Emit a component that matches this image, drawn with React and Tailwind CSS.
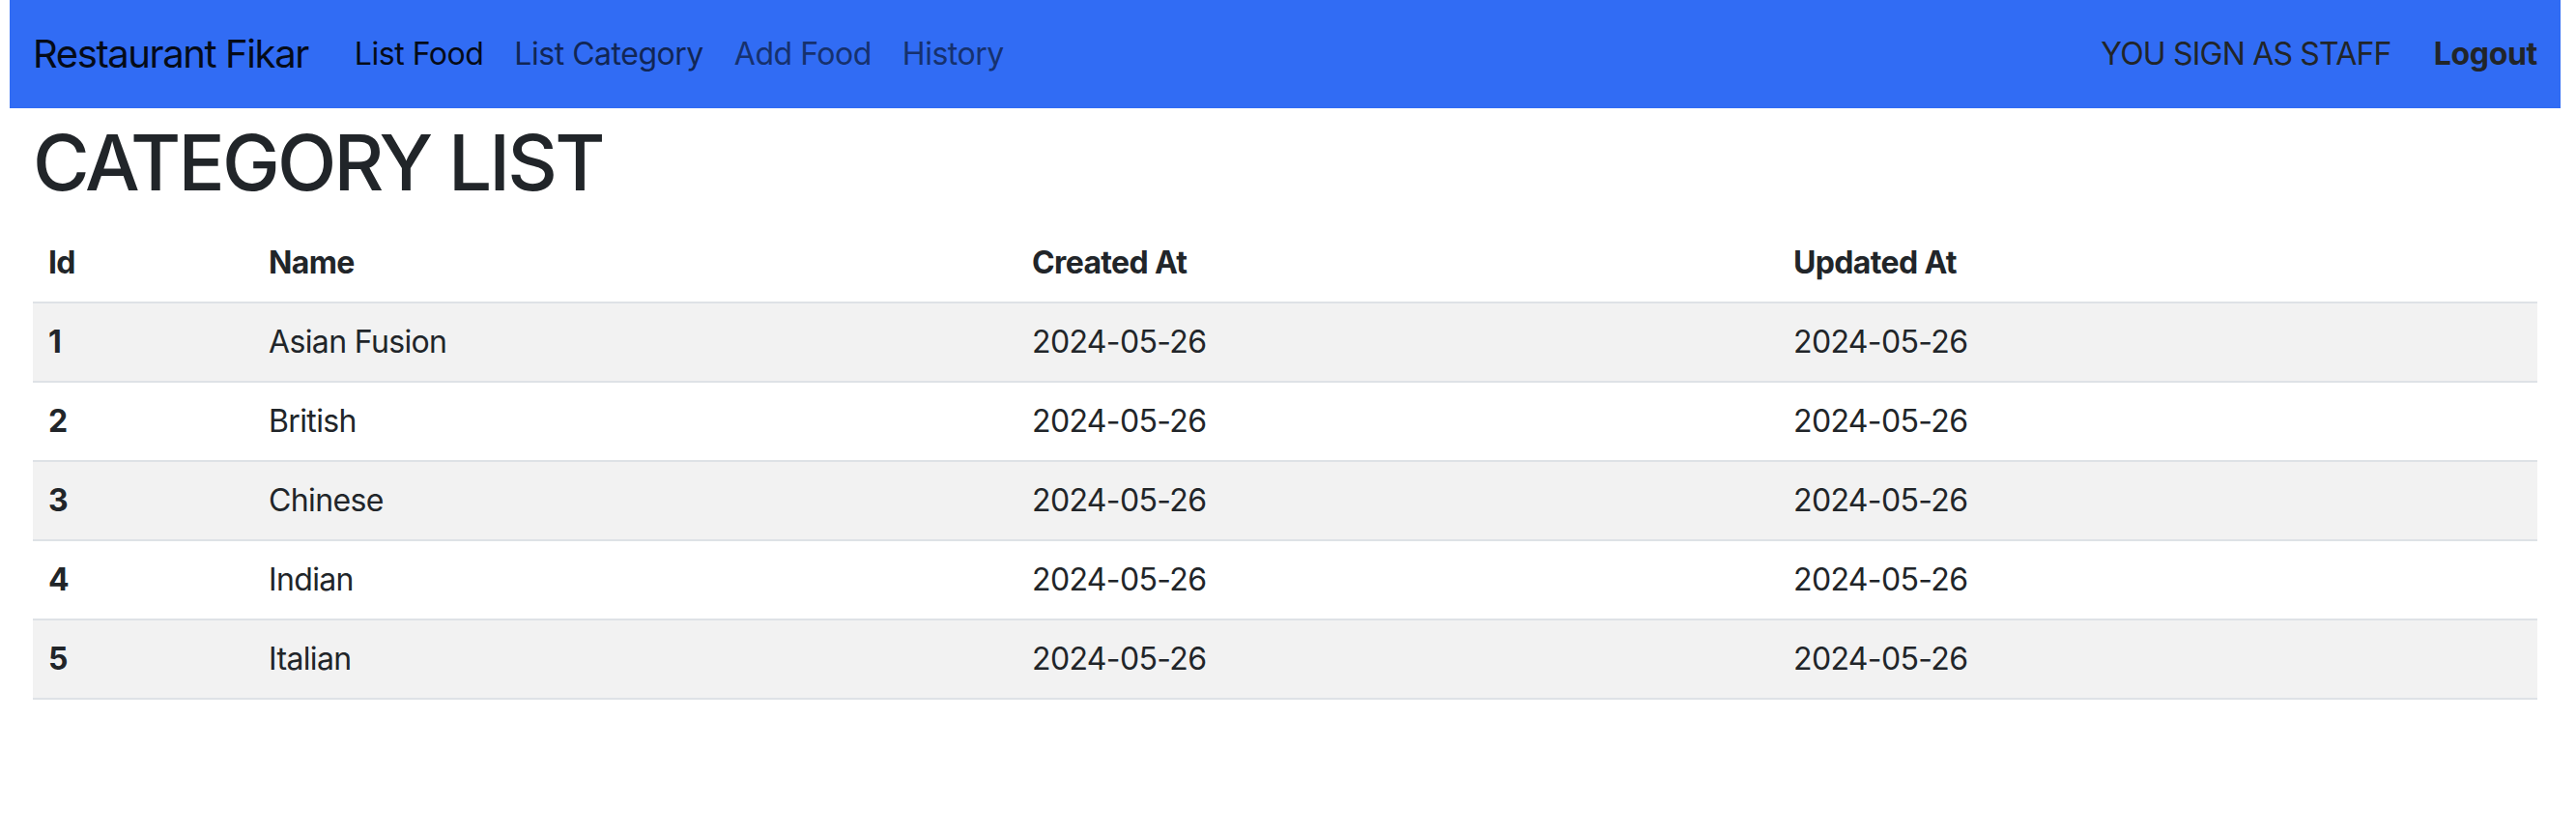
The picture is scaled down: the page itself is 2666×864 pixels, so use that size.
const categories = [
  { id: 1, name: 'Asian Fusion', createdAt: '2024-05-26', updatedAt: '2024-05-26' },
  { id: 2, name: 'British', createdAt: '2024-05-26', updatedAt: '2024-05-26' },
  { id: 3, name: 'Chinese', createdAt: '2024-05-26', updatedAt: '2024-05-26' },
  { id: 4, name: 'Indian', createdAt: '2024-05-26', updatedAt: '2024-05-26' },
  { id: 5, name: 'Italian', createdAt: '2024-05-26', updatedAt: '2024-05-26' },
];

function Navbar() {
  return (
    <nav className="flex items-center justify-between bg-[#316cf4] px-[24px] py-[16px]">
      <div className="flex items-center">
        <a href="#" className="py-[10px] mr-[32px] text-[40px] leading-[60px] tracking-[-0.035em] text-[#050b18]">
          Restaurant Fikar
        </a>
        <ul className="flex items-center text-[32px] leading-[48px] tracking-[-0.015em]">
          <li>
            <a href="#" className="block px-[16px] py-[16px] text-[#050b18]">List Food</a>
          </li>
          <li>
            <a href="#" className="block px-[16px] py-[16px] text-[#112655]">List Category</a>
          </li>
          <li>
            <a href="#" className="block px-[16px] py-[16px] text-[#16316e]">Add Food</a>
          </li>
          <li>
            <a href="#" className="block px-[16px] py-[16px] text-[#16316e]">History</a>
          </li>
        </ul>
      </div>
      <div className="flex items-center gap-[44px] text-[32px] leading-[48px] text-[#212529]">
        <span className="tracking-[-0.025em]">YOU SIGN AS STAFF</span>
        <a href="#" className="font-bold tracking-[-0.01em]">Logout</a>
      </div>
    </nav>
  );
}

function CategoryTable() {
  return (
    <table className="w-full table-fixed border-collapse text-left text-[32px] leading-[48px] tracking-[-0.02em] text-[#212529]">
      <thead>
        <tr className="border-b-2 border-[#dee2e6]">
          <th className="w-[228px] p-[16px] font-bold">Id</th>
          <th className="w-[790px] p-[16px] font-bold">Name</th>
          <th className="w-[788px] p-[16px] font-bold">Created At</th>
          <th className="p-[16px] font-bold">Updated At</th>
        </tr>
      </thead>
      <tbody>
        {categories.map((cat, i) => (
          <tr key={cat.id} className={i % 2 === 0 ? 'border-b-2 border-[#dee2e6] bg-[#f2f2f2]' : 'border-b-2 border-[#dee2e6] bg-white'}>
            <th className="p-[16px] font-bold">{cat.id}</th>
            <td className="p-[16px]">{cat.name}</td>
            <td className="p-[16px]">{cat.createdAt}</td>
            <td className="p-[16px]">{cat.updatedAt}</td>
          </tr>
        ))}
      </tbody>
    </table>
  );
}

export default function App() {
  return (
    <div className="min-h-screen bg-white pl-[10px] pr-[16px] font-['Inter','Noto_Sans',sans-serif]">
      <Navbar />
      <div className="px-[24px]">
        <h1 className="mt-[8px] mb-[16px] text-[80px] leading-[96px] font-medium tracking-[-0.035em] text-[#212529]">CATEGORY LIST</h1>
        <CategoryTable />
      </div>
    </div>
  );
}
